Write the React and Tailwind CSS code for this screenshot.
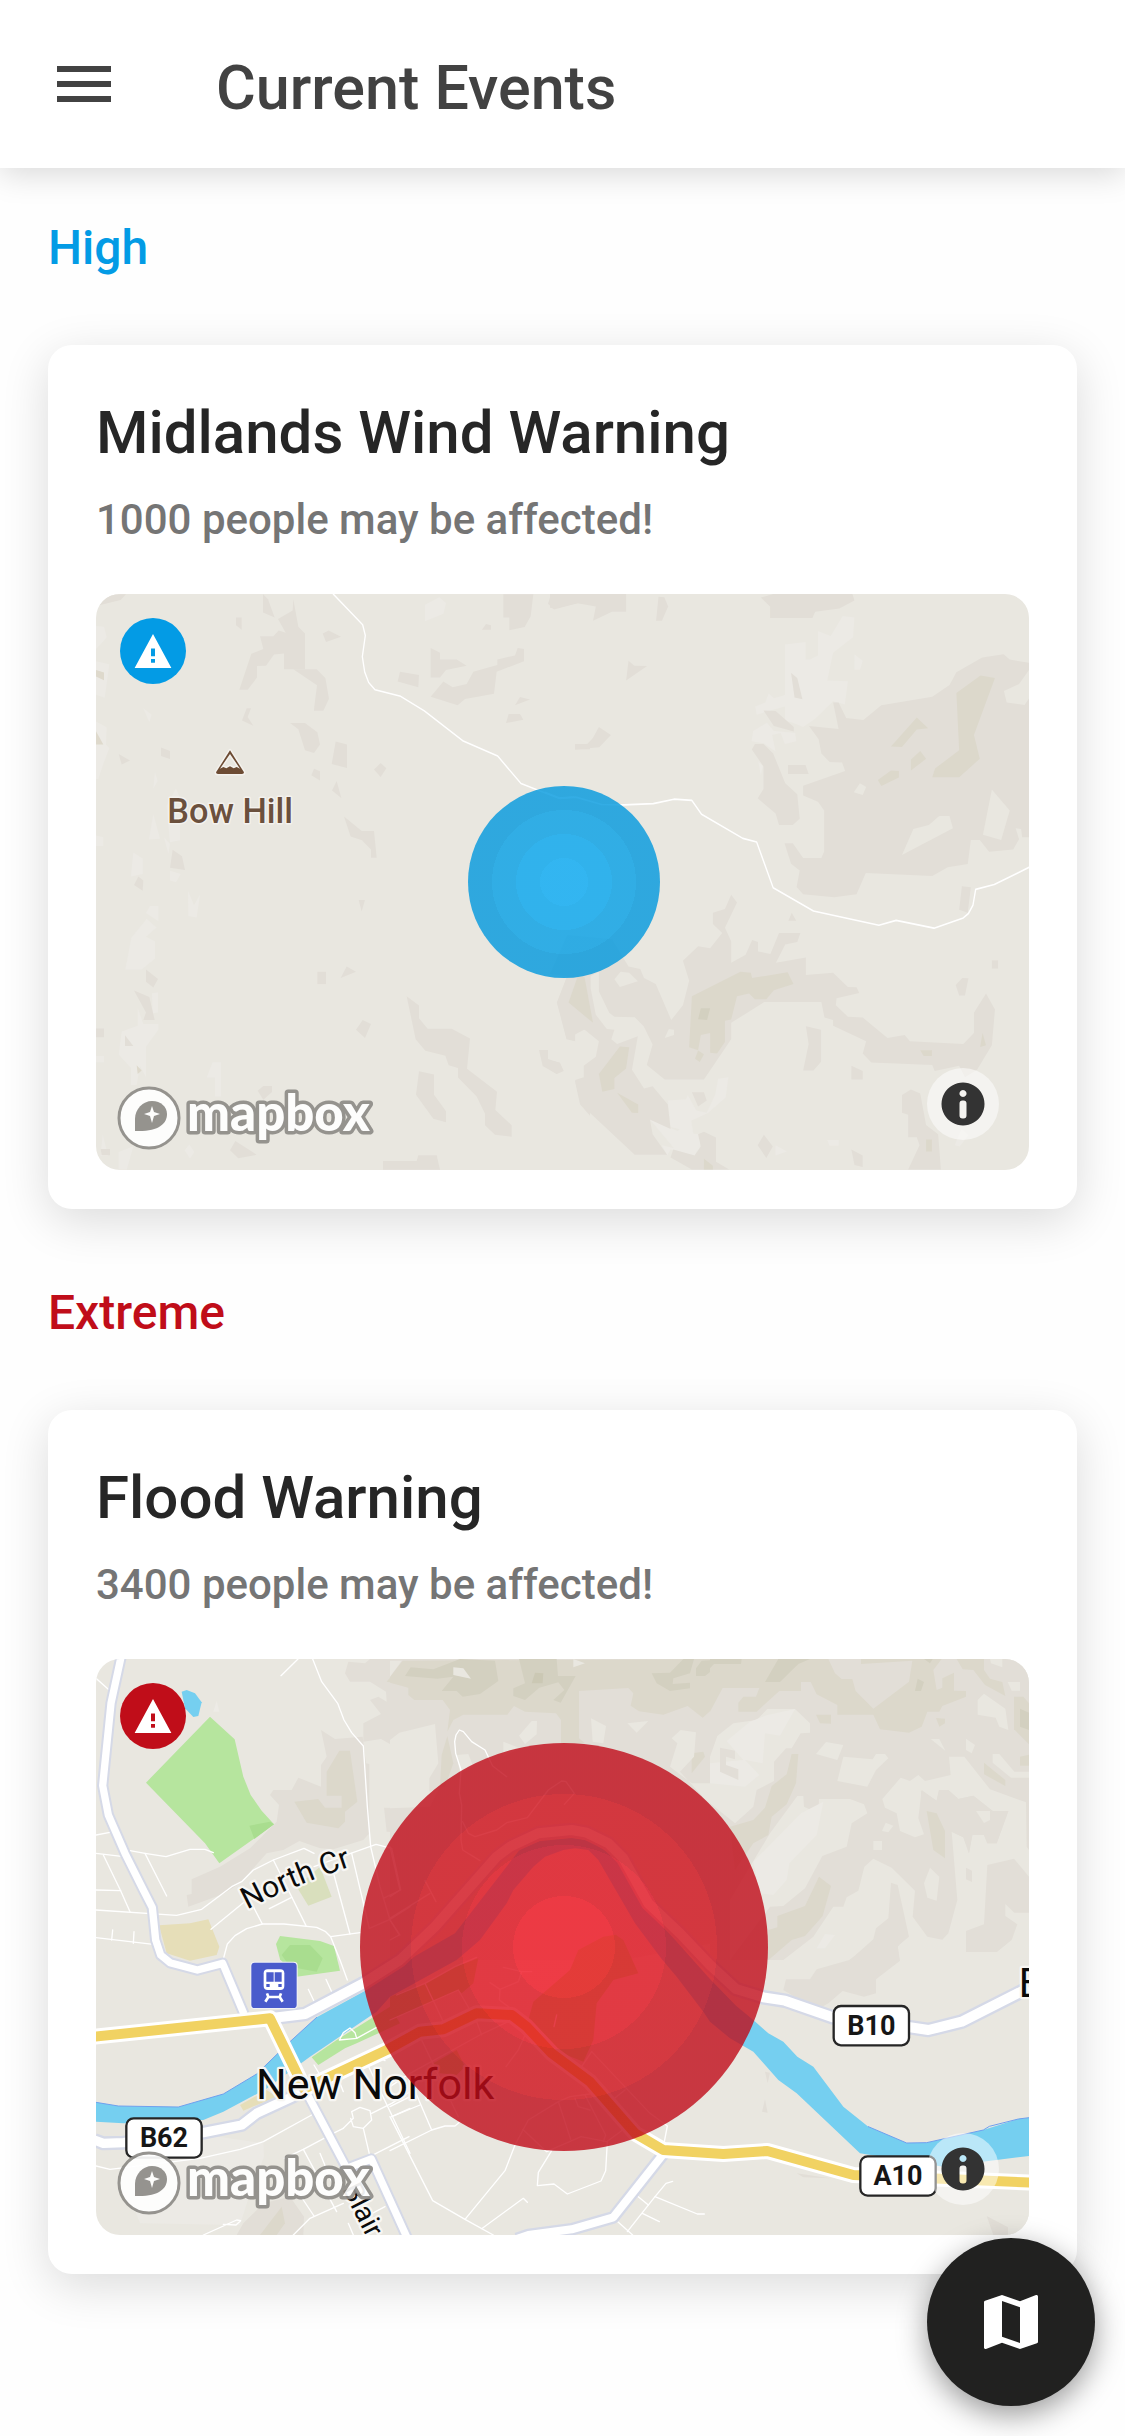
import React from "react";

const TERRAIN = "#e2ded7";
const SHADE = "#dcd8cb";
const DEEP = "#d3d0c0";
const LIGHT = "#eceae5";
const LAND = "#e9e7e0";

function Polys({ fill, list }) {
  return (
    <g fill={fill}>
      {list.map((points) => (
        <polygon key={points} points={points} />
      ))}
    </g>
  );
}

function Lines({ list, width = 4, stroke = "#ffffff" }) {
  return (
    <g fill="none" stroke={stroke} strokeWidth={width} strokeLinejoin="round" strokeLinecap="round">
      {list.map((points) => (
        <polyline key={points} points={points} />
      ))}
    </g>
  );
}

function Road({ points, width, fill, casing, casingWidth }) {
  return (
    <g fill="none" strokeLinejoin="round">
      <polyline points={points} stroke={casing} strokeWidth={casingWidth} />
      <polyline points={points} stroke={fill} strokeWidth={width} />
    </g>
  );
}

function Affected({ id, cx, cy, r, colors }) {
  return (
    <g>
      <radialGradient id={id}>
        {colors.map((color, i) => (
          <React.Fragment key={color}>
            <stop offset={i / 4} stopColor={color} />
            <stop offset={(i + 1) / 4} stopColor={color} />
          </React.Fragment>
        ))}
      </radialGradient>
      <circle cx={cx} cy={cy} r={r} fill={`url(#${id})`} fillOpacity="0.8" />
    </g>
  );
}

/* Map artwork is drawn on a 2799 x 1728 canvas, three units to the pixel. */
function MapCanvas({ label, children }) {
  return (
    <svg
      role="img"
      aria-label={label}
      viewBox="0 0 2799 1728"
      preserveAspectRatio="xMidYMid slice"
      className="block h-full w-full font-[Roboto,sans-serif]"
    >
      <rect width="2799" height="1728" fill={LAND} />
      {children}
    </svg>
  );
}

function WindMap() {
  return (
    <MapCanvas label="Map of the wind warning near Bow Hill">
      <g transform="translate(-18 -42) scale(1 1.148)">
        <Polys
          fill={LIGHT}
          list={[
            "1005,65 1048,45 1068,60 1060,88 1005,108",
            "18,120 42,122 50,150 40,160 18,180", "18,212 58,220 44,308 18,300",
            "18,370 50,385 48,430 58,440 40,480 25,520 18,520",
            "160,335 185,352 178,372", "195,503 203,525 190,545", "190,612 210,676 177,678",
            "230,590 258,545 270,570 270,680 240,685", "222,672 240,690 235,715",
            "130,712 158,728 158,768 123,775", "240,760 272,768 258,790 240,785",
            "294,812 312,850 330,822 320,882 295,878",
            "168,870 180,852 205,852 205,892", "170,885 200,908 168,932 195,945 195,990 155,1018 106,1018 124,935",
            "186,1080 204,1078 204,1130 188,1132", "143,1118 160,1160 205,1160 205,1175 168,1220 168,1300 150,1270 140,1320 123,1320 123,1275 86,1240 95,1180 143,1165",
            "350,1300 368,1260 393,1260 393,1350 375,1350 375,1300",
            "38,1450 54,1505 32,1505", "284,1490 298,1475 313,1495 300,1512", "86,1495 130,1480 110,1541 86,1541",
            "18,668 40,672 40,695 18,695", "18,1244 42,1244 42,1260 18,1260",
          ]}
        />
        <Polys
          fill={TERRAIN}
          list={[
            "18,37 108,37 92,52 18,68", "519,37 534,50 554,98 519,85",
            "438,98 455,98 455,130 438,118",
            "564,102 608,80 610,50 625,122 645,140 645,233 582,233 582,192 552,195 528,224 501,225 501,255 473,287 448,287 484,193 520,180 510,147 550,147 566,132 587,138",
            "610,233 680,233 706,256 717,310 700,342 672,342 673,330 681,275",
            "698,140 716,132 753,148 708,162",
            "470,335 483,335 473,358 490,381 456,367", "600,374 645,374 682,398 690,430 672,452 645,445 625,390",
            "737,422 771,430 771,491 725,481", "213,438 240,447 240,468 213,460", "86,455 120,472 95,482",
            "664,510 672,493 690,500 690,524", "740,525 754,570 726,550", "852,495 872,478 889,492 872,515",
            "762,618 815,656 852,656 860,726 843,726 843,704 816,680 782,670",
            "248,705 276,722 285,758 240,752", "145,775 160,785 158,812 132,797",
            "806,836 825,836 815,866", "682,1024 708,1024 708,1056 682,1056", "770,1010 798,1024 752,1040",
            "168,1018 204,1043 190,1065 168,1050", "132,1073 178,1090 194,1150 160,1150 168,1130",
            "798,1175 818,1150 843,1160 825,1197",
            "950,1088 987,1112 987,1145 1013,1173 1085,1173 1140,1198 1131,1277 1221,1337 1216,1385 1265,1425 1265,1455 1215,1450 1185,1425 1185,1395 1160,1350 1104,1300 1104,1275 1076,1268 1066,1243 1006,1230 977,1200",
            "987,1284 1032,1292 1032,1345 1068,1388 1068,1417 1030,1408 978,1345",
            "503,1335 520,1322 546,1322 546,1338 520,1358", "420,1490 436,1466 500,1502 445,1511",
            "879,1518 980,1518 985,1503 1040,1503 1050,1541 879,1541",
            "1347,1228 1374,1228 1374,1252 1410,1262 1418,1280 1400,1291 1358,1270",
            "105,1190 130,1218 105,1218", "32,1487 60,1487 60,1503 35,1503", "18,1172 42,1172 42,1195 18,1195",
            "1240,37 1330,37 1322,95 1304,123 1258,131 1258,98 1240,98", "1383,37 1500,37 1500,62 1465,60 1392,77 1374,62",
            "1176,130 1188,115 1203,118 1203,130", "1022,178 1050,190 1050,208 1100,208 1130,224 1068,235 1050,255 1022,255",
            "1022,305 1060,265 1088,280 1130,272 1150,240 1222,222 1222,208 1275,197 1283,178 1302,180 1302,212 1220,240 1212,297 1125,311 1103,327",
            "930,240 987,248 985,280 923,265", "1275,327 1290,306 1320,312", "1256,350 1290,350 1300,365 1248,374",
            "1455,430 1500,428 1500,442 1455,443",
            "1430,1040 1500,1020 1500,1175 1482,1175 1455,1188 1455,1205 1430,1198 1402,1105",
            "1482,1270 1500,1262 1500,1400 1470,1370 1455,1310 1485,1300",
          ]}
        />
        <Polys fill="#ded9cc" list={["18,395 40,430 18,430", "18,235 42,242 42,262 18,252", "140,1268 155,1282 143,1291", "1450,1040 1490,1035 1500,1150 1437,1105"]} />
        <Lines list={["730,37 818,117 826,145 817,200 824,240 836,268 855,287 932,304 1003,342 1118,420 1223,460 1293,532 1405,570 1450,567"]} />
      </g>
      <g transform="translate(1362 -42) scale(1.0332 1.2245)">
        <Polys
          fill={LIGHT}
          list={[
            "682,158 742,152 742,195 755,195 778,185 778,125 815,137 850,88 884,92 880,140 850,160 822,178 805,246 865,248 856,305 822,297 770,340 735,360 705,350 682,345 682,310 640,320 600,330 596,310 625,300 635,278 650,290 682,282",
            "590,370 630,350 650,370 712,375 715,395 682,402 670,375 645,380 655,420 620,400 585,395",
            "884,182 908,198 900,220 884,220", "605,445 618,455 612,478",
            "342,1275 395,1272 400,1262 425,1300 455,1305 480,1260 488,1222 518,1218 510,1268 460,1305 410,1325 418,1365 362,1365 375,1345 350,1340",
            "290,1322 385,1355 440,1358 435,1390 420,1410 350,1395 340,1410 325,1385 360,1392",
            "655,1385 688,1400 655,1410", "805,1372 838,1372 838,1386 812,1386", "1175,1385 1195,1345 1215,1360 1190,1388",
          ]}
        />
        <Polys
          fill={TERRAIN}
          list={[
            "0,34 221,34 221,78 180,78 125,100 133,65 80,57 12,70 0,68", "315,41 332,42 343,65 325,100 308,100",
            "612,43 650,34 878,34 884,50 840,70 770,78 762,93 639,93 639,65", "228,198 245,210 282,211 221,246",
            "142,360 177,380 143,410 73,415 73,402 108,402 124,388",
            "700,228 718,240 733,292 710,288", "620,320 655,321 708,360 708,371 650,358",
            "595,402 620,402 648,425 683,498 718,525 725,585 705,600 665,600 655,572 603,535 620,512 620,457 586,415",
            "691,453 742,453 751,475 691,475",
            "752,358 838,365 822,300 838,300 860,338 910,343 962,307 1110,286 1160,257 1180,226 1255,190 1317,182 1335,195 1391,203 1391,220 1362,255 1318,272 1326,300 1378,306 1391,290 1391,630 1371,630 1368,610 1352,608 1362,635 1345,660 1275,666 1248,637 1222,637 1213,696 1155,704 1110,725 917,718 890,770 825,777 735,770 716,752 725,712 700,695 681,645 705,645 735,681 788,681 796,665 796,565 778,543 735,528 735,504 857,468 848,447 812,446 788,425 780,390",
            "1196,750 1222,753 1213,815 1188,808", "692,835 702,815 715,835",
            "0,965 50,970 20,1035 48,1125 73,1130 73,1108 98,1100 142,1130 133,1168 98,1190 98,1218 73,1225 90,1285 246,1408 340,1408 298,1358 290,1322 350,1345 342,1285 298,1240 273,1246 238,1200 255,1118 195,1137 178,1125 187,1102 165,1100 133,1065 118,1000 118,970 142,960 142,1008 172,1060 187,1070 246,1071 272,1093 298,1138 281,1188 333,1224 447,1224 526,1125 526,1085 622,1034 788,1034 797,1072 822,1078 822,1092 918,1130 908,1160 933,1182 1110,1188 1117,1203 1188,1190 1205,1218 1240,1200 1283,1140 1292,1052 1266,1013 1231,1060 1231,1110 1200,1137 1045,1130 1030,1115 980,1122 908,1072 865,1070 830,1042 832,1025 898,1012 890,998 865,997 822,962 743,968 743,925 656,938 683,893 718,887 727,865 665,865 640,916 604,910 604,887 587,882 568,918 526,938 526,885 508,852 543,790 526,771 508,806 473,815 473,843 500,865 465,902 430,897 386,933 404,982 386,1042 352,1078 307,990 273,975 262,953 228,947 180,880 50,870",
            "743,1093 787,1102 787,1180 765,1202 735,1202 751,1137", "875,1190 908,1203 908,1224 875,1224",
            "1283,932 1301,932 1301,952 1283,952", "1197,975 1215,976 1205,1018 1188,1018 1178,992",
            "1022,1262 1048,1248 1075,1258 1092,1335 1127,1358 1135,1444 1040,1444 1073,1385 1065,1365 1040,1365 1040,1310 1022,1305",
            "603,1385 621,1359 647,1388 628,1416", "875,1395 908,1410 908,1438 884,1433",
            "350,1415 358,1395 420,1410 438,1388 430,1358 447,1352 482,1366 482,1425 520,1444 412,1444",
            "412,1255 447,1255 455,1275 430,1290", "0,1177 28,1182 40,1203 20,1210 0,1200",
          ]}
        />
        <Polys
          fill={LAND}
          list={[
            "882,520 900,498 918,507 908,527", "1022,674 1055,610 1100,600 1130,578 1160,578 1170,608",
            "1283,513 1335,565 1310,637 1257,624", "187,978 205,960 230,962 255,983 203,997", "333,1122 345,1100 360,1102 360,1115",
          ]}
        />
        <Polys
          fill={SHADE}
          list={[
            "1180,277 1250,234 1292,240 1231,380 1248,438 1188,483 1110,483 1118,462 1188,417",
            "990,408 1065,337 1098,363 1065,366 1022,409", "1048,440 1075,419 1092,438 1048,467",
            "952,490 990,467 1013,468 1013,484 962,505",
            "80,972 100,972 125,1085 54,1035", "412,1020 553,960 583,962 587,975 690,961 707,990 650,1005 628,1027 595,1027 578,1013 543,1020 526,1077 508,1080 508,1132 485,1160 465,1158 465,1110 438,1115 430,1152 404,1145",
            "142,1210 203,1143 230,1145 221,1197 187,1220 187,1247 152,1254", "195,1256 256,1285 256,1306 238,1305",
            "430,1153 447,1162 435,1181 421,1173", "1075,1152 1109,1152 1109,1166 1085,1166", "1256,1110 1266,1140 1249,1144",
            "1092,1371 1109,1371 1109,1400 1092,1400", "447,1418 473,1435 473,1444 447,1444",
          ]}
        />
        <Polys fill={DEEP} list={["438,1049 465,1049 456,1078 430,1076"]} />
        <Lines list={["-15,520 30,535 75,532 150,550 215,551 300,548 360,537 412,540 440,574 560,633 600,642 648,754 765,811 955,846 1005,834 1115,853 1200,828 1215,817 1228,797 1236,758 1290,746 1391,704"]} />
      </g>

      <g stroke="#f4f2ee" strokeWidth="9" strokeLinejoin="round" paintOrder="stroke">
        <path d="M402 469l-42 66q0 5 6 5h72q6 0 6-5zM402 480l30 44-10-5-9 4-11-6-11 6-9-4-10 5z" fill="#6d4c34" fillRule="evenodd" />
        <text x="214" y="688" fontSize="103" fontWeight="500" fill="#6b503d">Bow Hill</text>
      </g>
      <Affected id="wind-area" cx="1404" cy="864" r="288" colors={["#05a9f5", "#03a5ef", "#039fe6", "#0098de"]} />
    </MapCanvas>
  );
}

function Shield({ x, y, children }) {
  return (
    <g>
      <rect x={x} y={y} width="226" height="118" rx="22" fill="#ffffff" stroke="#262626" strokeWidth="7" />
      <text x={x + 113} y={y + 87} textAnchor="middle" fontSize="81" fontWeight="700" fill="#161616">
        {children}
      </text>
    </g>
  );
}

function FloodMap() {
  return (
    <MapCanvas label="Map of the flood warning around New Norfolk">
      <g transform="translate(-18 -57)">
        <Polys
          fill={TERRAIN}
          list={[
            "775,65 825,70 840,57 960,57 960,290 945,338 905,315 873,297 820,305 820,250 873,222 840,180 865,170 890,185 888,155 840,125 780,125 765,100",
            "693,270 735,297 818,290 828,370 838,372 838,580 820,600 730,628 690,625 628,603 580,630 530,640 450,730 400,762 295,800 290,765 305,762 305,718 390,680 480,625 560,545 567,495 540,465 550,450 605,450 625,413 693,440 693,375 710,350",
            "882,503 960,505 960,578 890,575",
          ]}
        />
        <Polys
          fill={SHADE}
          list={[
            "890,125 935,70 960,62 960,138", "748,332 780,332 802,485 765,515 765,545 745,565 650,548 613,485 685,477 705,503 755,503 755,467 710,467 710,395",
          ]}
        />
        <Polys fill="#edebe6" list={["380,183 388,215 370,215"]} />
      </g>
      <g transform="translate(882 -57)">
        <Polys fill={TERRAIN} list={["0,57 1020,57 1020,900 700,960 0,960"]} />
        <Polys
          fill={SHADE}
          list={[
            "38,62 1020,57 1020,145 998,145 970,205 938,233 893,198 820,224 747,214 722,197 730,160 715,144 567,153 567,295 585,310 513,310 513,240 498,220 405,215 372,198 352,224 220,224 190,240 172,275 180,210 158,180 73,180 55,165 55,143 0,128 0,110",
            "155,345 172,288 190,370 165,440 150,440", "905,340 940,335 945,350 905,400", "990,330 1020,325 1020,400 995,400",
          ]}
        />
        <Polys
          fill={DEEP}
          list={[
            "62,82 130,88 210,57 315,62 325,123 270,162 218,170 200,153 155,153 190,110 142,116 45,108",
            "387,57 500,57 504,108 557,108 512,188 490,180 523,150 505,127 448,143 405,180 370,168 370,145 405,130",
            "785,100 840,98 880,57 912,57 900,100 850,115 848,132 900,128 900,145 840,153 800,130", "935,62 1020,57 1020,72 980,80 945,108 918,108 918,85",
          ]}
        />
        <Polys fill="#cbc8b4" list={["435,98 460,100 458,130 425,130"]} />
        <Polys
          fill={LAND}
          list={[
            "0,62 35,62 0,110", "190,82 220,85 243,116 190,105", "550,57 585,70 550,82",
            "28,278 135,252 145,370 118,415 118,455 150,440 120,500 0,505 0,300",
            "387,287 425,243 441,243 440,283 405,312", "340,305 390,325 340,350", "603,235 648,258 640,310 608,305",
            "712,250 775,243 740,278", "200,345 235,342 250,380 210,400",
            "872,270 918,277 912,350 870,395 1020,560 1020,380 985,430 905,430 840,380 862,310 845,295",
          ]}
        />
      </g>
      <g transform="translate(1842 -57)">
        <Polys fill={TERRAIN} list={["0,57 957,57 957,960 0,960"]} />
        <Polys
          fill={LAND}
          list={[
            "22,288 70,250 140,240 172,207 255,207 300,250 300,278 272,280 245,325 228,325 192,365 192,423 140,450 130,500 75,550 0,490 0,350",
            "60,960 180,800 220,798 285,745 337,648 410,620 425,550 472,520 462,493 420,477 327,477 325,520 282,500 280,468 262,468 180,580 60,780",
            "220,960 310,890 370,800 400,800 410,772 445,752 463,680 490,656 545,683 615,752 608,830 652,890 697,899 715,880 742,780 725,575 760,592 777,640 787,585 822,585 832,610 860,610 895,513 848,513 790,467 745,477 715,450 687,450 680,482 635,450 625,535 642,583 615,592 570,573 560,520 525,503 517,477 572,413 600,423 625,405 645,423 722,405 717,350 763,350 840,448 948,487 950,620 957,630 957,710 912,656 832,675 822,853 768,873 768,936 860,936 905,900 922,853 886,828 886,792 913,818 957,818 957,960 568,960 563,918 597,890 563,735 543,728 535,835 498,865 490,898 420,960",
            "318,342 348,306 400,315 382,360", "400,350 488,358 498,342 525,342 535,355 498,390 472,440 382,423",
            "803,180 822,161 886,206 895,270 868,260 857,233 803,224", "848,342 868,342 913,395 957,395 957,413 903,413 848,368",
            "662,297 688,297 706,332", "768,296 795,315 785,340 768,330", "893,126 930,126 930,152 905,152",
            "840,57 877,57 877,82 843,70", "490,603 516,603 516,630 490,630", "527,548 550,557 535,577 516,573",
            "660,683 688,710 680,782 652,773 642,730",
          ]}
        />
        <Polys fill={LIGHT} list={["50,303 120,245 172,225 255,207 210,287 165,280 158,370 105,360 148,405 105,440 0,430 0,370 100,360", "130,665 273,520 340,485 320,585 238,670 230,720 190,765 150,760", "320,925 345,882 375,885 345,925"]} />
        <Polys
          fill={TERRAIN}
          list={["30,323 75,332 75,358 48,350 48,375 85,388 85,420 30,395", "768,683 786,692 786,726 768,718", "632,452 680,482 687,450 715,450 745,477 790,467 848,513 895,513 860,610 832,610 822,585 787,585 777,640 760,592 725,575 660,575"]}
        />
        <Polys
          fill={SHADE}
          list={[
            "0,57 355,57 375,100 395,117 427,117 437,153 490,206 597,125 607,62 453,72 453,57 695,57 670,90 680,150 697,143 697,115 732,98 732,152 768,153 768,170 697,198 688,215 652,215 635,260 597,278 510,268 490,224 382,224 382,195 320,163 302,126 273,126 273,153 208,153 140,215 85,215 85,188 100,170 138,170 148,144 38,144 0,215",
            "740,57 822,57 822,90 840,116 877,126 886,168 825,135 790,90 758,88",
            "318,224 363,224 363,251 330,250", "678,234 705,236 705,250 688,260", "912,170 940,170 957,190 957,313 912,268",
            "930,350 957,344 957,377 930,377", "822,368 886,420 886,438 822,403",
            "245,342 265,342 258,430 230,493 185,530 175,585 130,610 75,690 60,560 130,540 165,503 185,438 230,403",
            "650,513 680,520 705,573 705,655 670,630", "327,710 363,738 338,828 285,888 245,900 175,960 175,870 202,862 202,828 285,798",
          ]}
        />
        <Polys fill={DEEP} list={["0,57 95,57 93,72 12,72 0,85", "205,57 300,57 265,72 210,126 165,126", "623,116 642,126 633,153 615,153", "642,57 668,57 660,70", "930,206 957,218 957,270 930,260"]} />
        <Polys fill={LAND} list={["798,513 840,513 840,540 822,549"]} />
      </g>
      <g transform="translate(1842 843)">
        <Polys fill={LAND} list={["0,60 957,60 957,885 0,885"]} />
        <Polys fill={TERRAIN} list={["500,0 580,0 563,20 570,62 498,118 498,160 462,170 398,153 355,190 320,210 220,150 228,118 300,118 320,88 418,60", "768,0 900,0 860,36 768,36", "165,395 180,398 173,430", "165,478 173,518 156,515", "830,828 894,862 894,885 850,885", "260,700 360,715 280,712"]} />
        <Polys fill={SHADE} list={["175,0 240,0 175,60"]} />
      </g>
      <g transform="translate(-18 843)">
        <Polys fill="#eceae5" list={["350,585 520,610 522,650 480,760 450,855 150,850 100,720"]} />
        <Polys fill={TERRAIN} list={["520,790 600,770 642,830 640,885 440,885 460,850"]} />
        <Polys fill={SHADE} list={["575,800 585,850 560,885 510,885"]} />
      </g>

      <g transform="translate(-18 -57)">
        <Polys fill="#b6e59e" list={["360,230 434,298 460,410 482,465 515,512 552,553 388,670 345,610 168,428", "570,888 690,903 732,918 750,992 620,1010 570,958 558,912"]} />
        <Polys fill="#a9dd8f" list={["478,557 540,545 552,553 493,597", "600,915 660,915 698,955 680,995 600,980 575,945"]} />
        <Polys fill="#d9dfbd" list={["620,740 690,680 725,770 655,797"]} />
        <Polys fill="#e6deb8" list={["207,856 300,850 355,838 388,920 380,945 300,962 230,940", "450,1395 530,1350 560,1370 460,1412"]} />
        <polygon points="275,155 290,150 315,160 335,187 325,228 310,231 285,205" fill="#75cff0" />
      </g>
      <g transform="translate(-18 843)">
        <Polys fill="#b6e59e" list={["665,352 740,300 900,200 930,250 800,310 765,325 685,375"]} />
      </g>
      <g transform="translate(882 843)">
        <Polys
          fill="#b6e59e"
          list={[
            "0,170 105,130 195,80 265,55 250,130 215,160 205,150 0,240",
            "700,0 745,100 670,120 620,190 610,300 580,365 480,325 415,240 430,185 540,90 565,30 640,-10 677,-16",
            "130,370 200,330 225,380 200,405 150,400",
          ]}
        />
      </g>

      <polygon
        fill="#75cff0"
        points="0,1330 67,1341 247,1344 382,1305 482,1245 582,1148 662,1075 802,998 942,900 1077,823 1272,571 1332,546 1427,537 1482,545 1562,598 1622,703 1702,803 1842,960 1920,1040 1972,1083 2017,1123 2062,1148 2104,1193 2152,1223 2242,1343 2317,1403 2432,1452 2492,1451 2662,1413 2767,1380 2799,1376 2799,1491 2542,1523 2292,1483 2102,1303 2047,1263 1972,1178 1902,1138 1842,1088 1822,1058 1742,953 1697,900 1617,793 1507,603 1477,573 1437,568 1402,573 1347,593 1312,623 1252,693 1232,733 1152,843 1082,903 882,1013 842,1058 642,1193 510,1290 382,1358 322,1383 82,1393 0,1388"
      />
      <Lines width={3} stroke="#6f9fee" list={["0,1330 67,1341 247,1344 382,1305 482,1245 582,1148 662,1075", "2317,1403 2432,1452 2492,1451 2662,1413 2680,1402 2767,1380 2799,1376"]} />

      <g transform="translate(-18 -57)">
        <Lines
          list={[
            "18,115 60,152", "624,57 573,107", "668,57 695,125 743,190 762,240 785,278 820,318 832,500 842,620 870,740 900,840 930,885",
            "18,585 60,577", "18,640 120,652", "120,632 165,640 228,650 300,628 345,628 370,638", "40,645 92,752 120,815", "18,750 92,752",
            "18,810 260,826 335,808 425,740 455,725 490,690 550,660 642,625 672,640", "165,640 230,768",
            "68,870 65,900", "132,875 130,910", "18,893 190,913", "363,868 470,780", "538,806 605,772", "550,660 648,857", "490,800 517,852",
            "672,680 740,655 858,613 905,625", "728,690 780,882", "785,640 838,865", "722,890 810,878",
            "400,957 412,912 435,887 470,866 517,852 582,852 680,862 707,875 722,890 750,960 772,1020",
            "905,625 932,750 880,775", "838,865 900,838 960,800",
          ]}
        />
      </g>
      <g transform="translate(-18 843)">
        <Lines
          list={[
            "655,148 675,190", "708,118 725,155", "748,300 760,278 780,264 795,278 800,295 748,300", "800,295 860,262",
            "672,375 690,405", "18,678 60,688 330,655 450,628 520,605 665,525", "583,655 640,628 740,575 760,565",
            "760,565 790,535 785,515 810,502 840,512 845,540 820,565 790,560 782,535", "845,520 905,490 960,455", "820,565 840,650", "640,628 740,815",
            "770,685 957,590", "835,378 960,640", "860,350 885,362", "905,530 960,505",
            "340,885 440,840 452,842 438,855 400,853", "610,885 660,835 760,790", "600,720 672,828", "690,640 725,725", "775,850 790,885", "800,845 885,800", "750,430 760,455",
          ]}
        />
      </g>
      <g transform="translate(882 843)">
        <Lines
          list={[
            "20,165 105,130 195,80 260,52", "0,240 205,150 240,210", "105,130 160,245", "0,440 60,400 270,285 365,240", "95,300 205,530", "260,245 275,285",
            "405,285 385,330 348,380", "500,225 492,260", "340,82 395,95 385,125 330,148 300,128", "330,148 328,180 375,215", "395,95 425,95",
            "0,500 60,470", "80,465 125,570", "0,632 125,570 165,558 195,558 210,545", "0,530 128,782 225,838 310,885", "5,530 90,495",
            "375,615 345,692 225,838", "485,632 445,697 442,737 492,732 532,762 633,723 647,692 652,605", "275,866 400,775 412,787",
            "375,615 415,540 505,485 540,470 600,462", "398,568 470,635 573,590 650,605 705,565", "505,485 542,598", "585,465 647,585 640,605", "555,475 565,500 600,510",
            "605,335 780,520 832,558 822,610", "575,380 605,335", "670,478 705,450",
            "712,875 795,770 828,730 848,724", "742,768 775,795", "795,770 922,822 943,822", "757,820 808,845", "680,842 728,885",
          ]}
        />
      </g>
      <g transform="translate(882 -57)">
        <Lines
          list={[
            "350,410 308,378 285,330 245,305 220,275 208,270 198,285 194,305 197,340 213,390 208,460 215,495 213,600 218,630 270,662",
            "218,545 235,580 255,590 320,570 350,548 412,533 475,450 515,423 528,425 553,460 523,493",
            "0,620 30,750 0,770", "105,722 138,785", "0,835 120,760", "0,840 28,885 0,900",
          ]}
        />
      </g>

      <Road points="76,-10 45,133 20,380 37,468 87,583 142,693 169,746 179,843 194,888 222,911 304,933 380,913 444,1065" width={22} fill="#fff" casing="#d5d9e7" casingWidth={34} />
      <Road points="522,1078 627,1065 802,973 912,903 1017,803 1202,593 1242,563 1327,523 1427,513 1472,521 1537,553 1582,598 1657,733 1752,823 1842,918 1920,990 2002,1015 2067,1025 2210,1075 2442,1105 2497,1113 2597,1088 2799,986" width={30} fill="#fff" casing="#d5d9e7" casingWidth={44} />
      <Road points="-5,1443 22,1453 82,1451 322,1421 437,1398 482,1363 622,1298" width={28} fill="#fff" casing="#d5d9e7" casingWidth={42} />
      <Road points="622,1283 752,1528 826,1500 935,1740" width={22} fill="#fff" casing="#d5d9e7" casingWidth={34} />
      <Road points="1702,1485 1552,1675 1427,1711 1297,1728 1262,1740" width={24} fill="#fff" casing="#d5d9e7" casingWidth={38} />
      <g fill="none" strokeLinejoin="round">
        <g stroke="#ffffff" strokeWidth="48">
          <polyline points="-5,1133 522,1078 622,1283" />
          <polyline points="622,1290 872,1173 972,1118 1042,1111 1142,1063 1247,1068 1292,1103 1367,1183 1482,1268 1617,1423 1702,1473 1882,1485 2014,1476 2272,1548 2805,1571" />
        </g>
        <g stroke="#f1d262" strokeWidth="30">
          <polyline points="-5,1133 522,1078 622,1283" />
          <polyline points="612,1295 872,1173 972,1118 1042,1111 1142,1063 1247,1068 1292,1103 1367,1183 1482,1268 1617,1423 1702,1473 1882,1485 2014,1476 2272,1548 2805,1571" />
        </g>
      </g>

      <path id="north-cr" d="M454 752Q600 674 790 614" fill="none" />
      <g stroke="#f7f6f3" strokeWidth="14" strokeLinejoin="round" paintOrder="stroke" fill="#0a0a0a">
        <text fontSize="90">
          <textPath href="#north-cr">North Cr</textPath>
        </text>
        <text x="480" y="1321" fontSize="129">New Norfolk</text>
        <text x="2768" y="1014" fontSize="120">E</text>
        <text transform="translate(738 1590) rotate(63)" fontSize="84">Blair</text>
      </g>

      <rect x="463" y="908" width="142" height="142" rx="12" fill="#f1f1f6" />
      <rect x="466" y="911" width="136" height="136" rx="10" fill="#4a5bcc" />
      <g>
        <rect x="503" y="931" width="62" height="62" rx="12" fill="#fff" />
        <path d="M511 940h22v28h-22zM536 940h21v28h-21zM511 975h10v9h-10zM547 975h10v9h-10z" fill="#4a5bcc" />
        <path d="M513 1003l4 11h34l4-11M517 1014l-9 14M551 1014l9 14" fill="none" stroke="#fff" strokeWidth="8" />
      </g>
      <Shield x={91} y={1378}>B62</Shield>
      <Shield x={2213} y={1041}>B10</Shield>
      <Shield x={2293} y={1492}>A10</Shield>
      <Affected id="flood-area" cx="1404" cy="864" r="612" colors={["#ef111f", "#df0f1c", "#cf0e19", "#c00b19"]} />
    </MapCanvas>
  );
}

function MapboxLogo() {
  return (
    <svg viewBox="0 0 268 72" className="h-[72px] w-[268px]" role="img" aria-label="Mapbox">
      <g opacity="0.92">
        <circle cx="33" cy="36" r="30" fill="#fff" stroke="#8e8c88" strokeWidth="3" />
        <path d="M19 49V37C19 27 27 19 36 19s15 6 15 13c0 10-9 18-32 17z" fill="#8e8c88" />
        <path d="M36 24l2 6 6 2-6 2-2 7-2-7-6-2 6-2z" fill="#fff" />
        <text x="71" y="49" fontSize="51" fontWeight="900" fill="#fff" stroke="#8e8c88" strokeWidth="7" strokeLinejoin="round" paintOrder="stroke" className="font-[Lato,sans-serif]">
          mapbox
        </text>
      </g>
    </svg>
  );
}

function EventCard({ title, people, badge, map }) {
  return (
    <article className="mx-12 rounded-3xl bg-white px-12 pt-[52px] pb-[39px] shadow-[0_12px_48px_rgba(0,0,0,0.14)]">
      <h3 className="text-[60px] leading-[72px] font-medium text-[#262626]">{title}</h3>
      <p className="mt-[23px] text-[42px] leading-[56px] font-medium text-[#757575]">{people} people may be affected!</p>
      <div className="relative mt-[46px] h-[576px] overflow-hidden rounded-3xl">
        {map}
        <span className={`absolute top-6 left-6 flex size-[66px] items-center justify-center rounded-full ${badge}`}>
          <svg viewBox="0 0 512 512" className="size-[42px] fill-white" aria-hidden="true">
            <path d="M32 464h448L256 48 32 464zm248-64h-48v-48h48v48zm0-80h-48v-96h48v96z" />
          </svg>
        </span>
        <a href="#mapbox" className="absolute bottom-4 left-5">
          <MapboxLogo />
        </a>
        <button type="button" aria-label="Map information" className="absolute right-[30px] bottom-[30px] size-[72px] rounded-full bg-white/50">
          <svg viewBox="0 0 72 72" className="size-full" aria-hidden="true">
            <path
              fill="#333333"
              fillRule="evenodd"
              d="M36 14.500a21.500 21.500 0 1 0 .010 0zM36 22a3.500 3.500 0 1 1-.010 0zM35.500 32.500h1a3 3 0 0 1 3 3v12a3 3 0 0 1-3 3h-1a3 3 0 0 1-3-3v-12a3 3 0 0 1 3-3z"
            />
          </svg>
        </button>
      </div>
    </article>
  );
}

export default function App() {
  return (
    <div className="min-h-screen bg-[#fefefe] font-[Roboto,sans-serif]">
      <header className="relative flex h-[168px] items-center gap-24 bg-white px-12 shadow-[0_6px_30px_rgba(0,0,0,0.15)]">
        <button type="button" aria-label="Open menu" className="size-[72px]">
          <svg viewBox="0 0 24 24" className="size-full fill-[#424242]" aria-hidden="true">
            <path d="M3 18h18v-2H3v2zm0-5h18v-2H3v2zm0-7v2h18V6H3z" />
          </svg>
        </button>
        <h1 className="pt-[7px] text-[61px] leading-[72px] font-medium text-[#424242]">Current Events</h1>
      </header>

      <main>
        <section className="pt-[52px]">
          <h2 className="mx-12 mb-[69px] text-[48px] leading-[56px] font-medium text-[#039be5]">High</h2>
          <EventCard title="Midlands Wind Warning" people="1000" badge="bg-[#039be5]" map={<WindMap />} />
        </section>
        <section className="pt-[76px]">
          <h2 className="mx-12 mb-[69px] text-[48px] leading-[56px] font-medium text-[#c00d19]">Extreme</h2>
          <EventCard title="Flood Warning" people="3400" badge="bg-[#c00d19]" map={<FloodMap />} />
        </section>
      </main>

      <button
        type="button"
        aria-label="Show map"
        className="fixed right-[30px] bottom-[30px] flex size-[168px] items-center justify-center rounded-full bg-[#212120] shadow-[0_9px_30px_rgba(0,0,0,0.4)]"
      >
        <svg viewBox="0 0 24 24" className="size-[72px] fill-white" aria-hidden="true">
          <path d="M20.500 3l-.160.030L15 5.100 9 3 3.360 4.900c-.210.070-.360.250-.360.480V20.500c0 .280.220.500.500.500l.160-.030L9 18.900l6 2.100 5.640-1.900c.210-.070.360-.250.360-.480V3.500c0-.280-.220-.500-.500-.500zM15 19l-6-2.110V5l6 2.110V19z" />
        </svg>
      </button>
    </div>
  );
}
